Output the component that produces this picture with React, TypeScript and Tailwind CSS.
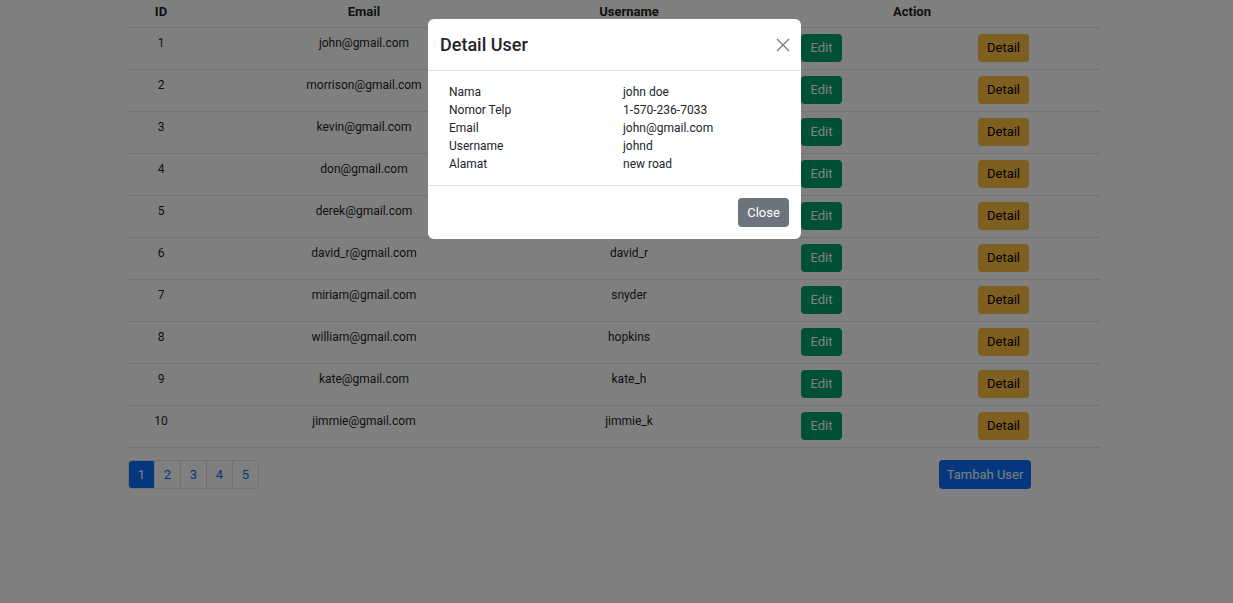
import React from 'react';

// ── Data ──────────────────────────────────────────────────────────────────────

interface User {
  id: number;
  email: string;
  username: string;
}

const users: User[] = [
  { id: 1, email: 'john@gmail.com', username: 'johnd' },
  { id: 2, email: 'morrison@gmail.com', username: 'mor_2314' },
  { id: 3, email: 'kevin@gmail.com', username: 'kevinryan' },
  { id: 4, email: 'don@gmail.com', username: 'donero' },
  { id: 5, email: 'derek@gmail.com', username: 'derek' },
  { id: 6, email: 'david_r@gmail.com', username: 'david_r' },
  { id: 7, email: 'miriam@gmail.com', username: 'snyder' },
  { id: 8, email: 'william@gmail.com', username: 'hopkins' },
  { id: 9, email: 'kate@gmail.com', username: 'kate_h' },
  { id: 10, email: 'jimmie@gmail.com', username: 'jimmie_k' },
];

const detail: [string, string][] = [
  ['Nama', 'john doe'],
  ['Nomor Telp', '1-570-236-7033'],
  ['Email', 'john@gmail.com'],
  ['Username', 'johnd'],
  ['Alamat', 'new road'],
];

const cols = 'grid grid-cols-[66px_340px_190px_194px_182px]';

// ── Table ─────────────────────────────────────────────────────────────────────

function UserTable() {
  return (
    <div className="w-[972px] ml-[128px] text-[12px] text-[#1c1f23]">
      <div className={`${cols} h-[28px] border-b border-[#dee2e6] font-bold text-[13px]`}>
        <div className="text-center pt-[2px] leading-5">ID</div>
        <div className="text-center pt-[2px] leading-5">Email</div>
        <div className="text-center pt-[2px] leading-5">Username</div>
        <div className="col-span-2 text-center pt-[2px] leading-5">Action</div>
      </div>
      {users.map((u) => (
        <div key={u.id} className={`${cols} h-[42px] border-b border-[#dee2e6]`}>
          <div className="text-center pt-[5px] leading-5">{u.id}</div>
          <div className="text-center pt-[5px] leading-5">{u.email}</div>
          <div className="text-center pt-[5px] leading-5">{u.username}</div>
          <div className="pt-[6px] pl-[77px]">
            <button className="h-[28px] w-[41px] rounded-[4px] bg-[#00a06c] text-white text-[13px]">
              Edit
            </button>
          </div>
          <div className="pt-[6px] pl-[60px]">
            <button className="h-[28px] w-[51px] rounded-[4px] bg-[#ffbf3e] text-black text-[13px]">
              Detail
            </button>
          </div>
        </div>
      ))}
      <div className="flex items-center justify-between mt-[12px] pr-[69px] text-[13px]">
        <div className="flex h-[29px] rounded-[4px] border border-[#dee2e6] overflow-hidden">
          {[1, 2, 3, 4, 5].map((n) => (
            <div
              key={n}
              className={
                n === 1
                  ? 'w-[25px] flex items-center justify-center bg-[#0d6efd] text-white'
                  : 'w-[26px] flex items-center justify-center border-l border-[#dee2e6] text-[#0d6efd] bg-white'
              }
            >
              {n}
            </div>
          ))}
        </div>
        <button className="h-[29px] w-[92px] rounded-[4px] bg-[#0d6efd] text-white text-[13px]">
          Tambah User
        </button>
      </div>
    </div>
  );
}

// ── Modal ─────────────────────────────────────────────────────────────────────

function DetailModal() {
  return (
    <div className="fixed inset-0 bg-black/50">
      <div className="absolute left-[428px] top-[19px] w-[373px] bg-white rounded-[6px] text-[#212529]">
        <div className="h-[52px] flex items-center justify-between px-3 border-b border-[#dee2e6]">
          <h5 className="text-[18px] leading-6 font-medium">Detail User</h5>
          <svg width="14" height="14" viewBox="0 0 14 14" className="mr-[-1px]">
            <path d="M1 1L13 13M13 1L1 13" stroke="#7d7d7d" strokeWidth="1.4" />
          </svg>
        </div>
        <div className="pt-[12px] pb-[12px] pl-[21px] text-[12px] leading-[18px]">
          {detail.map(([label, value]) => (
            <div key={label} className="flex">
              <div className="w-[174px]">{label}</div>
              <div>{value}</div>
            </div>
          ))}
        </div>
        <div className="h-[54px] border-t border-[#dee2e6] flex justify-end items-start pt-[12px] pr-[12px]">
          <button className="h-[29px] w-[51px] rounded-[4px] bg-[#6c757d] text-white text-[13px]">
            Close
          </button>
        </div>
      </div>
    </div>
  );
}

export default function App() {
  return (
    <div className="h-[603px] bg-white" style={{ fontFamily: 'Roboto, "Noto Sans", sans-serif' }}>
      <UserTable />
      <DetailModal />
    </div>
  );
}
